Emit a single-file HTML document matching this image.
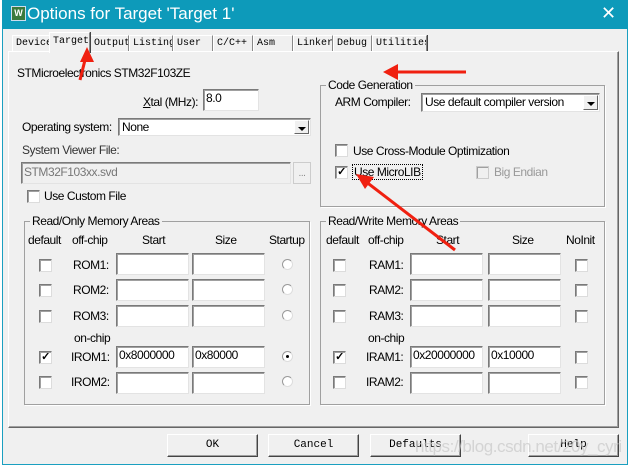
<!DOCTYPE html>
<html><head><meta charset="utf-8"><style>
*{box-sizing:border-box;margin:0;padding:0}
body{width:630px;height:467px;background:#fff;position:relative;overflow:hidden;font-family:"Liberation Sans",Arial,sans-serif;font-size:12px;letter-spacing:-0.45px;color:#000}
.a{position:absolute}
.win{left:2px;top:0;width:626px;height:465px;background:#f0f0f0;border:1px solid #1a9fc0;border-top:none}
.title{left:2px;top:0;width:626px;height:29px;background:#0d9aba;color:#fff;font-size:17px;letter-spacing:0}
.tab{position:absolute;top:35px;height:17px;background:#f0f0f0;border:1px solid #fff;border-right:1px solid #888;border-bottom:none;font-family:"Liberation Mono",monospace;font-size:10px;letter-spacing:0;padding:2px 0 0 3px;box-shadow:1px 0 0 #444;overflow:hidden;white-space:nowrap}
.sel{top:32px;height:21px;z-index:3;padding-top:3px}
.panel{left:8px;top:51px;width:611px;height:377px;border:1px solid #fff;border-right-color:#666;border-bottom-color:#666;box-shadow:inset -1px -1px 0 #a0a0a0}
.grp{position:absolute;border:1px solid #a0a0a0;box-shadow:1px 1px 0 #fff}
.gt{position:absolute;background:#f0f0f0;padding:0 2px;top:-8px;left:5px;white-space:nowrap}
.in{position:absolute;background:#fff;border:1px solid #7a7a7a;border-right-color:#e3e3e3;border-bottom-color:#e3e3e3;box-shadow:inset 1px 1px 0 #a0a0a0;padding:1px 2px;white-space:nowrap;overflow:hidden}
.cb{position:absolute;width:13px;height:13px;background:#fff;border:1px solid #7a7a7a;border-right-color:#dcdcdc;border-bottom-color:#dcdcdc;box-shadow:inset 1px 1px 0 #a0a0a0;font-size:11px;line-height:11px;text-align:center;font-weight:bold}
.rd{position:absolute;width:11px;height:11px;border-radius:50%;background:#fff;border:1px solid #999;border-right-color:#ddd;border-bottom-color:#ddd}
.dd{position:absolute;right:1px;top:1px;bottom:1px;width:15px;background:#f0f0f0;border:1px solid #fff;border-right-color:#666;border-bottom-color:#666}
.dd:after{content:"";position:absolute;left:3px;top:6px;border:4px solid transparent;border-top:4px solid #000;border-bottom:none}
.btn{position:absolute;top:434px;height:23px;width:91px;background:#f0f0f0;border:1px solid #fff;border-right-color:#444;border-bottom-color:#444;box-shadow:inset -1px -1px 0 #a0a0a0;font-family:"Liberation Mono",monospace;font-size:11px;letter-spacing:0;text-align:center;line-height:20px}
.t{position:absolute;white-space:nowrap}
.r{position:absolute;white-space:nowrap;text-align:right}
</style></head><body>
<div class="a win"></div>
<div class="a title">
 <div class="a" style="left:9px;top:6px;width:15px;height:15px;background:#3c7a3c;border:1px solid #cde;font-size:9px;line-height:13px;text-align:center;font-weight:bold">W</div>
 <div class="t" style="left:25px;top:4px">Options for Target 'Target 1'</div>
 <div class="t" style="left:599px;top:3px;font-size:18px">✕</div>
</div>
<div class="tab" style="left:12px;width:38px">Device</div>
<div class="tab sel" style="left:49px;width:41px">Target</div>
<div class="tab" style="left:90px;width:39px">Output</div>
<div class="tab" style="left:129px;width:44px">Listing</div>
<div class="tab" style="left:173px;width:40px">User</div>
<div class="tab" style="left:213px;width:40px">C/C++</div>
<div class="tab" style="left:253px;width:40px">Asm</div>
<div class="tab" style="left:293px;width:40px">Linker</div>
<div class="tab" style="left:333px;width:39px">Debug</div>
<div class="tab" style="left:372px;width:55px">Utilities</div>
<div class="a panel"></div>
<div class="a" style="left:50px;top:51px;width:39px;height:2px;background:#f0f0f0;z-index:4"></div>

<div class="t" style="left:17px;top:66px">STMicroelectronics STM32F103ZE</div>
<div class="r" style="right:432px;top:95px"><u>X</u>tal (MHz):</div>
<div class="in" style="left:203px;top:89px;width:56px;height:22px">8.0</div>
<div class="t" style="left:22px;top:120px">Operating system:</div>
<div class="in" style="left:118px;top:118px;width:193px;height:18px;padding:1px 3px">None<div class="dd"></div></div>
<div class="t" style="left:22px;top:143px;color:#333">System Viewer File:</div>
<div class="in" style="left:21px;top:162px;width:270px;height:22px;background:#f0f0f0;color:#777;padding:2px 2px">STM32F103xx.svd</div>
<div class="a" style="left:293px;top:162px;width:18px;height:22px;border:1px solid #ccc;color:#888;text-align:center;font-size:10px;line-height:22px">...</div>
<div class="cb" style="left:27px;top:190px"></div>
<div class="t" style="left:44px;top:189px">Use Custom File</div>

<div class="grp" style="left:320px;top:85px;width:285px;height:122px"><div class="gt">Code Generation</div></div>
<div class="t" style="left:335px;top:95px">ARM Compiler:</div>
<div class="in" style="left:421px;top:93px;width:179px;height:19px;padding:1px 3px">Use default compiler version<div class="dd"></div></div>
<div class="cb" style="left:335px;top:144px"></div>
<div class="t" style="left:353px;top:144px">Use Cross-Module Optimization</div>
<div class="cb" style="left:335px;top:166px">✓</div>
<div class="t" style="left:352px;top:164px;border:1px dotted #000;padding:0 1px">Use MicroLIB</div>
<div class="cb" style="left:476px;top:166px;background:#f0f0f0;border-color:#ccc"></div>
<div class="t" style="left:494px;top:165px;color:#999">Big Endian</div>

<div class="grp" style="left:24px;top:221px;width:286px;height:184px"><div class="gt">Read/Only Memory Areas</div></div>
<div class="t" style="left:28px;top:233px">default</div><div class="t" style="left:72px;top:233px">off-chip</div>
<div class="t" style="left:142px;top:233px">Start</div><div class="t" style="left:215px;top:233px">Size</div><div class="t" style="left:269px;top:233px">Startup</div>
<div class="grp" style="left:320px;top:221px;width:285px;height:184px"><div class="gt">Read/Write Memory Areas</div></div>
<div class="t" style="left:326px;top:233px">default</div><div class="t" style="left:368px;top:233px">off-chip</div>
<div class="t" style="left:436px;top:233px">Start</div><div class="t" style="left:512px;top:233px">Size</div><div class="t" style="left:566px;top:233px">NoInit</div>
<div class="t" style="left:74px;top:331px">on-chip</div>
<div class="t" style="left:368px;top:331px">on-chip</div>

<div class="cb" style="left:39px;top:259px"></div><div class="t" style="left:73px;top:258px">ROM1:</div>
<div class="in" style="left:116px;top:253px;width:73px;height:22px"></div><div class="in" style="left:192px;top:253px;width:73px;height:22px"></div><div class="rd" style="left:282px;top:259px"></div>
<div class="cb" style="left:39px;top:284px"></div><div class="t" style="left:73px;top:283px">ROM2:</div>
<div class="in" style="left:116px;top:279px;width:73px;height:22px"></div><div class="in" style="left:192px;top:279px;width:73px;height:22px"></div><div class="rd" style="left:282px;top:284px"></div>
<div class="cb" style="left:39px;top:310px"></div><div class="t" style="left:73px;top:309px">ROM3:</div>
<div class="in" style="left:116px;top:305px;width:73px;height:22px"></div><div class="in" style="left:192px;top:305px;width:73px;height:22px"></div><div class="rd" style="left:282px;top:310px"></div>
<div class="cb" style="left:39px;top:351px">✓</div><div class="t" style="left:71px;top:350px">IROM1:</div>
<div class="in" style="left:116px;top:346px;width:73px;height:22px">0x8000000</div><div class="in" style="left:192px;top:346px;width:73px;height:22px">0x80000</div><div class="rd" style="left:282px;top:351px"><div class="a" style="left:3px;top:3px;width:3px;height:3px;background:#000;border-radius:50%"></div></div>
<div class="cb" style="left:39px;top:376px"></div><div class="t" style="left:71px;top:375px">IROM2:</div>
<div class="in" style="left:116px;top:372px;width:73px;height:22px"></div><div class="in" style="left:192px;top:372px;width:73px;height:22px"></div><div class="rd" style="left:282px;top:376px"></div>

<div class="cb" style="left:333px;top:259px"></div><div class="t" style="left:369px;top:258px">RAM1:</div>
<div class="in" style="left:410px;top:253px;width:73px;height:22px"></div><div class="in" style="left:488px;top:253px;width:73px;height:22px"></div><div class="cb" style="left:575px;top:259px"></div>
<div class="cb" style="left:333px;top:284px"></div><div class="t" style="left:369px;top:283px">RAM2:</div>
<div class="in" style="left:410px;top:279px;width:73px;height:22px"></div><div class="in" style="left:488px;top:279px;width:73px;height:22px"></div><div class="cb" style="left:575px;top:284px"></div>
<div class="cb" style="left:333px;top:310px"></div><div class="t" style="left:369px;top:309px">RAM3:</div>
<div class="in" style="left:410px;top:305px;width:73px;height:22px"></div><div class="in" style="left:488px;top:305px;width:73px;height:22px"></div><div class="cb" style="left:575px;top:310px"></div>
<div class="cb" style="left:333px;top:351px">✓</div><div class="t" style="left:366px;top:350px">IRAM1:</div>
<div class="in" style="left:410px;top:346px;width:73px;height:22px">0x20000000</div><div class="in" style="left:488px;top:346px;width:73px;height:22px">0x10000</div><div class="cb" style="left:575px;top:351px"></div>
<div class="cb" style="left:333px;top:376px"></div><div class="t" style="left:366px;top:375px">IRAM2:</div>
<div class="in" style="left:410px;top:372px;width:73px;height:22px"></div><div class="in" style="left:488px;top:372px;width:73px;height:22px"></div><div class="cb" style="left:575px;top:376px"></div>

<div class="btn" style="left:167px">OK</div>
<div class="btn" style="left:268px">Cancel</div>
<div class="btn" style="left:370px">Defaults</div>
<div class="btn" style="left:528px">Help</div>
<div class="t" style="left:415px;top:437px;font-size:17px;color:rgba(200,200,200,0.7)">https://blog.csdn.net/20y_cyri</div>

<svg class="a" style="left:0;top:0;z-index:10" width="630" height="467">
<g fill="#f02010" stroke="#f02010">
<line x1="80" y1="80" x2="87" y2="52" stroke-width="3"/><polygon points="87,47 80,62 94,62" stroke="none"/>
<line x1="466" y1="72" x2="395" y2="72" stroke-width="3"/><polygon points="383,72 398,64 398,80" stroke="none"/>
<line x1="455" y1="250" x2="365" y2="181" stroke-width="3"/><polygon points="356,174 374,177 365,189" stroke="none"/>
</g></svg>
</body></html>
